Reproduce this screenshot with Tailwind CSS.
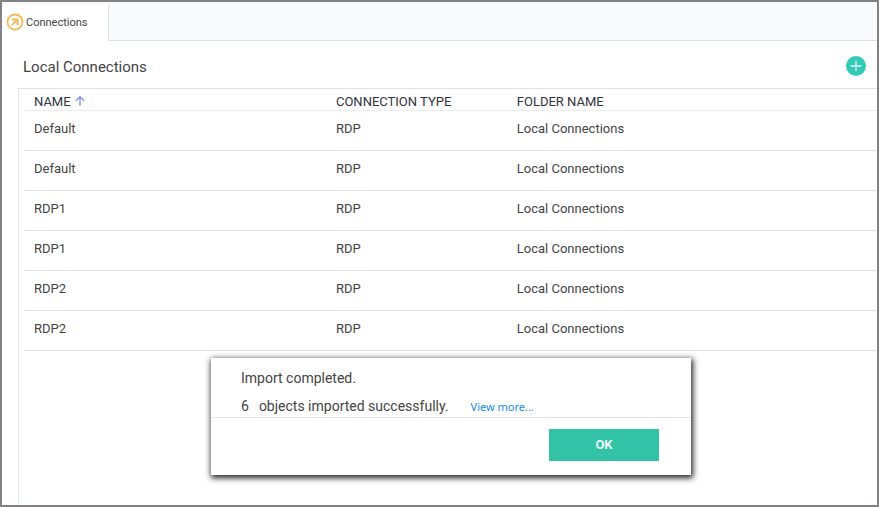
<!DOCTYPE html>
<html lang="en">
<head>
<meta charset="utf-8">
<meta name="viewport" content="width=device-width, initial-scale=1">
<title>Connections</title>
<script src="https://cdn.jsdelivr.net/npm/@tailwindcss/browser@4"></script>
</head>
<body class="bg-white font-[Roboto,sans-serif] text-[#444444]">
<div class="relative flex min-h-screen flex-col border-2 border-[#838181]">
  <nav class="flex h-[39px] bg-[#f9fafc]">
    <a href="#" class="mt-[3px] flex w-[107px] items-center gap-[2px] border-r border-[#dfe3e5] bg-white pl-1 pb-[2px] text-[11px]">
      <svg class="size-[18px] shrink-0" viewBox="0 0 18 18" fill="none" stroke="#fbb754" aria-hidden="true">
        <circle cx="9" cy="9" r="7.5" stroke-width="1.8"/>
        <path d="M5.8 12.2 11.4 6.6M6 6.5h5.6v5.6" stroke-width="1.9"/>
      </svg>
      <span class="pt-[2px]">Connections</span>
    </a>
    <div class="grow border-b border-[#dfe3e5]"></div>
  </nav>
  <header class="flex h-[47px] items-center justify-between pr-[11px] pl-[21px] pt-1">
    <h1 class="pt-px text-[15px]">Local Connections</h1>
    <button type="button" aria-label="Add connection" class="mb-[2px] size-5 rounded-full bg-[#33cab7]">
      <svg class="size-5" viewBox="0 0 20 20" fill="none" stroke="#ffffff" stroke-opacity=".85" stroke-width="1.3" aria-hidden="true"><path d="M10 4.8v10.4M4.8 10h10.4"/></svg>
    </button>
  </header>
  <main class="ml-4 grow border-t border-l border-[#dfe4e4] pl-[5px]">
    <table class="w-full table-fixed border-collapse text-left text-[13px]">
      <colgroup><col class="w-[35.4%]"><col class="w-[21.2%]"><col></colgroup>
      <thead class="text-[#2f3340]">
        <tr class="border-b border-[#eaeeee] [&>th]:py-0 [&>th]:pt-[5px] [&>th]:pl-[10px] [&>th]:leading-4 [&>th]:font-normal">
          <th aria-sort="ascending"><span class="flex items-center gap-1">NAME
            <svg class="mb-[2px] size-[10px]" viewBox="0 0 10 10" fill="none" stroke="#8583f5" stroke-width="1.3" aria-hidden="true"><path d="M5 9.5V1M1 4.8 5 .9l4 3.9"/></svg></span></th>
          <th>CONNECTION TYPE</th><th>FOLDER NAME</th>
        </tr>
      </thead>
      <tbody class="[&_td]:pb-1 [&_td]:pl-[10px] [&>tr]:h-10 [&>tr]:border-b [&>tr]:border-[#dfe3e3]">
        <tr><td>Default</td><td>RDP</td><td>Local Connections</td></tr>
        <tr><td>Default</td><td>RDP</td><td>Local Connections</td></tr>
        <tr><td>RDP1</td><td>RDP</td><td>Local Connections</td></tr>
        <tr><td>RDP1</td><td>RDP</td><td>Local Connections</td></tr>
        <tr><td>RDP2</td><td>RDP</td><td>Local Connections</td></tr>
        <tr><td>RDP2</td><td>RDP</td><td>Local Connections</td></tr>
      </tbody>
    </table>
  </main>
  <section role="dialog" aria-label="Import result" class="absolute top-[356px] left-[209px] w-[480px] bg-white shadow-[1px_2px_6px_1px_#222222]">
    <div class="border-b border-[#e2e6e6] px-[30px] pt-[10px] text-sm">
      <p class="leading-5">Import completed.</p>
      <p class="mt-2 flex items-baseline leading-5"><span class="mr-[10px]">6</span>objects imported successfully.<a href="#" class="ml-[22px] font-['Noto_Sans',sans-serif] text-[11px] text-[#0f8bf0]">View more...</a></p>
    </div>
    <div class="flex justify-end px-8 pt-[11px] pb-[14px]">
      <button type="button" class="h-8 w-[110px] bg-[#32c2a5] text-[13px] font-bold text-[#eefaf7]">OK</button>
    </div>
  </section>
</div>
</body>
</html>
